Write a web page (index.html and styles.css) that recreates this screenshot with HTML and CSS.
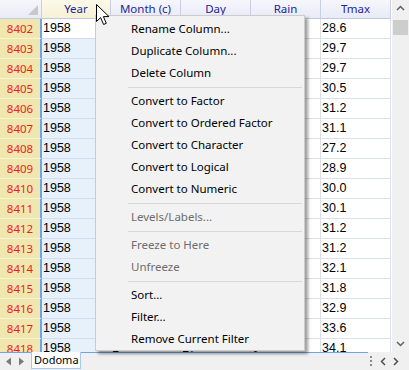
FILE: index.html
```html
<!DOCTYPE html>
<html>
<head>
<meta charset="utf-8">
<link rel="stylesheet" href="styles.css">
</head>
<body>
<div class="app">
  <div class="main">
    <div class="grid">
      <div class="corner"><span class="tri"></span></div>
      <div class="ch sel">Year</div>
      <div class="ch">Month (c)</div>
      <div class="ch">Day</div>
      <div class="ch">Rain</div>
      <div class="ch">Tmax</div>

      <div class="rh">8402</div><div class="c yr act">1958</div><div class="c">1</div><div class="c">1</div><div class="c">0</div><div class="c">28.6</div>
      <div class="rh">8403</div><div class="c yr">1958</div><div class="c">1</div><div class="c">2</div><div class="c">0</div><div class="c">29.7</div>
      <div class="rh">8404</div><div class="c yr">1958</div><div class="c">1</div><div class="c">3</div><div class="c">0</div><div class="c">29.7</div>
      <div class="rh">8405</div><div class="c yr">1958</div><div class="c">1</div><div class="c">4</div><div class="c">0</div><div class="c">30.5</div>
      <div class="rh">8406</div><div class="c yr">1958</div><div class="c">1</div><div class="c">5</div><div class="c">0</div><div class="c">31.2</div>
      <div class="rh">8407</div><div class="c yr">1958</div><div class="c">1</div><div class="c">6</div><div class="c">0</div><div class="c">31.1</div>
      <div class="rh">8408</div><div class="c yr">1958</div><div class="c">1</div><div class="c">7</div><div class="c">0</div><div class="c">27.2</div>
      <div class="rh">8409</div><div class="c yr">1958</div><div class="c">1</div><div class="c">8</div><div class="c">0</div><div class="c">28.9</div>
      <div class="rh">8410</div><div class="c yr">1958</div><div class="c">1</div><div class="c">9</div><div class="c">0</div><div class="c">30.0</div>
      <div class="rh">8411</div><div class="c yr">1958</div><div class="c">1</div><div class="c">10</div><div class="c">0</div><div class="c">30.1</div>
      <div class="rh">8412</div><div class="c yr">1958</div><div class="c">1</div><div class="c">11</div><div class="c">0</div><div class="c">31.2</div>
      <div class="rh">8413</div><div class="c yr">1958</div><div class="c">1</div><div class="c">12</div><div class="c">0</div><div class="c">31.2</div>
      <div class="rh">8414</div><div class="c yr">1958</div><div class="c">1</div><div class="c">13</div><div class="c">0</div><div class="c">32.1</div>
      <div class="rh">8415</div><div class="c yr">1958</div><div class="c">1</div><div class="c">14</div><div class="c">0</div><div class="c">31.8</div>
      <div class="rh">8416</div><div class="c yr">1958</div><div class="c">1</div><div class="c">15</div><div class="c">0</div><div class="c">32.9</div>
      <div class="rh">8417</div><div class="c yr">1958</div><div class="c">1</div><div class="c">16</div><div class="c">0</div><div class="c">33.6</div>
      <div class="rh">8418</div><div class="c yr">1958</div><div class="c">1</div><div class="c">17</div><div class="c">0</div><div class="c">34.1</div>
    </div>
    <div class="vscroll">
      <svg class="arr" width="17" height="17" viewBox="0 0 17 17"><path d="M5 10 L8.5 6.5 L12 10" fill="none" stroke="#606060" stroke-width="1.5"/></svg>
      <div class="track"><div class="thumb"></div></div>
      <svg class="arr" width="17" height="17" viewBox="0 0 17 17"><path d="M5 7 L8.5 10.5 L12 7" fill="none" stroke="#606060" stroke-width="1.5"/></svg>
    </div>
  </div>
  <div class="tabbar">
    <div class="navs">
      <svg width="30" height="17" viewBox="0 0 30 17"><path d="M11 4.5 L6 8.5 L11 12.5 Z" fill="#7a7a7a"/><path d="M19 4.5 L24 8.5 L19 12.5 Z" fill="#7a7a7a"/></svg>
    </div>
    <div class="tab">Dodoma</div>
    <div class="tabline"></div>
    <div class="hnav">
      <svg width="40" height="17" viewBox="0 0 40 17"><g fill="#8a8a8a"><rect x="2" y="3" width="2" height="2"/><rect x="2" y="7" width="2" height="2"/><rect x="2" y="11" width="2" height="2"/></g><path d="M17 5 L13.5 8.5 L17 12" fill="none" stroke="#505050" stroke-width="1.5"/><path d="M26 5 L29.5 8.5 L26 12" fill="none" stroke="#505050" stroke-width="1.5"/></svg>
    </div>
  </div>
</div>

<div class="menu">
  <div class="mi">Rename Column...</div>
  <div class="mi">Duplicate Column...</div>
  <div class="mi">Delete Column</div>
  <div class="sep"></div>
  <div class="mi">Convert to Factor</div>
  <div class="mi">Convert to Ordered Factor</div>
  <div class="mi">Convert to Character</div>
  <div class="mi">Convert to Logical</div>
  <div class="mi">Convert to Numeric</div>
  <div class="sep"></div>
  <div class="mi dis">Levels/Labels...</div>
  <div class="sep"></div>
  <div class="mi dis">Freeze to Here</div>
  <div class="mi dis">Unfreeze</div>
  <div class="sep"></div>
  <div class="mi">Sort...</div>
  <div class="mi">Filter...</div>
  <div class="mi">Remove Current Filter</div>
</div>

<svg class="cursor" width="15" height="23" viewBox="0 0 15 23"><path d="M0.5 0.5 L0.5 17.5 L4.6 13.6 L7.6 20.5 L10.3 19.3 L7.4 12.6 L13 12.6 Z" fill="#fff" stroke="#000" stroke-width="1" stroke-linejoin="miter"/></svg>
</body>
</html>
```

FILE: styles.css
```css
* { box-sizing: border-box; }
html, body { margin: 0; padding: 0; }
body {
  width: 409px;
  height: 370px;
  overflow: hidden;
  background: #f0f0f0;
  font-family: "Noto Sans", "Liberation Sans", sans-serif;
  position: relative;
}
.app {
  display: flex;
  flex-direction: column;
  width: 409px;
  height: 370px;
}
.main {
  display: flex;
  height: 352px;
}
.grid {
  width: 392px;
  height: 352px;
  overflow: hidden;
  background: #fff;
  display: grid;
  grid-template-columns: 42px 69px 70px 70px 70px 70px;
  grid-template-rows: 19px repeat(17, 20px);
  align-content: start;
}
.corner {
  position: relative;
  background: linear-gradient(#f6f7fc, #e9ebf6);
  border-right: 1px solid #c9cfe2;
  border-bottom: 1px solid #c3c9dc;
}
.tri {
  position: absolute;
  right: 3px;
  bottom: 3px;
  width: 0;
  height: 0;
  border-left: 10px solid transparent;
  border-bottom: 10px solid #c6c8cc;
}
.ch {
  background: linear-gradient(#f6f7fc, #e8eaf6);
  border-right: 1px solid #c9cfe2;
  border-bottom: 1px solid #c3c9dc;
  color: #25259a;
  font-size: 11.5px;
  text-align: center;
  line-height: 18px;
}
.ch.sel {
  background: linear-gradient(#fbf9e8, #f6f1d6);
}
.rh {
  background: #f0e7ae;
  border-right: 2px solid #6ea4e2;
  border-bottom: 1px solid #f8f3d8;
  color: #ee1d1d;
  font-size: 11.5px;
  text-align: center;
  line-height: 19px;
}
.c {
  border-right: 1px solid #dbe0ea;
  border-bottom: 1px solid #dbe0ea;
  font-family: "Liberation Sans", Arial, sans-serif;
  font-size: 12.5px;
  color: #000;
  line-height: 19px;
  padding-left: 1px;
  white-space: nowrap;
  overflow: hidden;
}
.c.yr {
  background: #e6f1fc;
  border-bottom-color: #d4dcea;
}
.c.yr.act {
  background: #fff;
}
.vscroll {
  width: 17px;
  height: 352px;
  background: #f0f0f0;
  display: flex;
  flex-direction: column;
}
.arr { display: block; flex: none; }
.track {
  flex: 1;
  padding: 3px 1px 0 1px;
}
.thumb {
  height: 15px;
  background: #cdcdcd;
}
.tabbar {
  position: relative;
  height: 18px;
  display: flex;
  align-items: flex-start;
  background: #f0f0f0;
}
.navs {
  width: 31px;
  height: 18px;
  border-top: 1px solid #6ea4e2;
}
.navs svg { display: block; }
.tab {
  width: 50px;
  height: 17px;
  background: #fff;
  border: 1px solid #a9c8ea;
  border-top: none;
  font-size: 11px;
  line-height: 16px;
  padding-left: 2px;
  color: #000;
  white-space: nowrap;
}
.tabline {
  flex: 1;
  height: 18px;
  border-top: 1px solid #6ea4e2;
}
.hnav {
  width: 41px;
  height: 18px;
}
.hnav svg { display: block; margin-top: 1px; }
.menu {
  position: absolute;
  left: 95px;
  top: 15px;
  width: 210px;
  background: #f2f2f2;
  border: 1px solid #cccccc;
  padding: 2px 2px 0 2px;
  box-shadow: 3px 3px 3px rgba(0, 0, 0, 0.38);
  font-size: 11.5px;
  color: #000;
}
.mi {
  height: 22px;
  line-height: 22px;
  padding-left: 33px;
  white-space: nowrap;
}
.mi.dis { color: #6d6d6d; }
.sep {
  height: 6px;
  margin-left: 30px;
  display: flex;
  align-items: center;
}
.sep::before {
  content: "";
  display: block;
  width: 100%;
  height: 1px;
  background: #d7d7d7;
}
.cursor {
  position: absolute;
  left: 96px;
  top: 4px;
}
```
